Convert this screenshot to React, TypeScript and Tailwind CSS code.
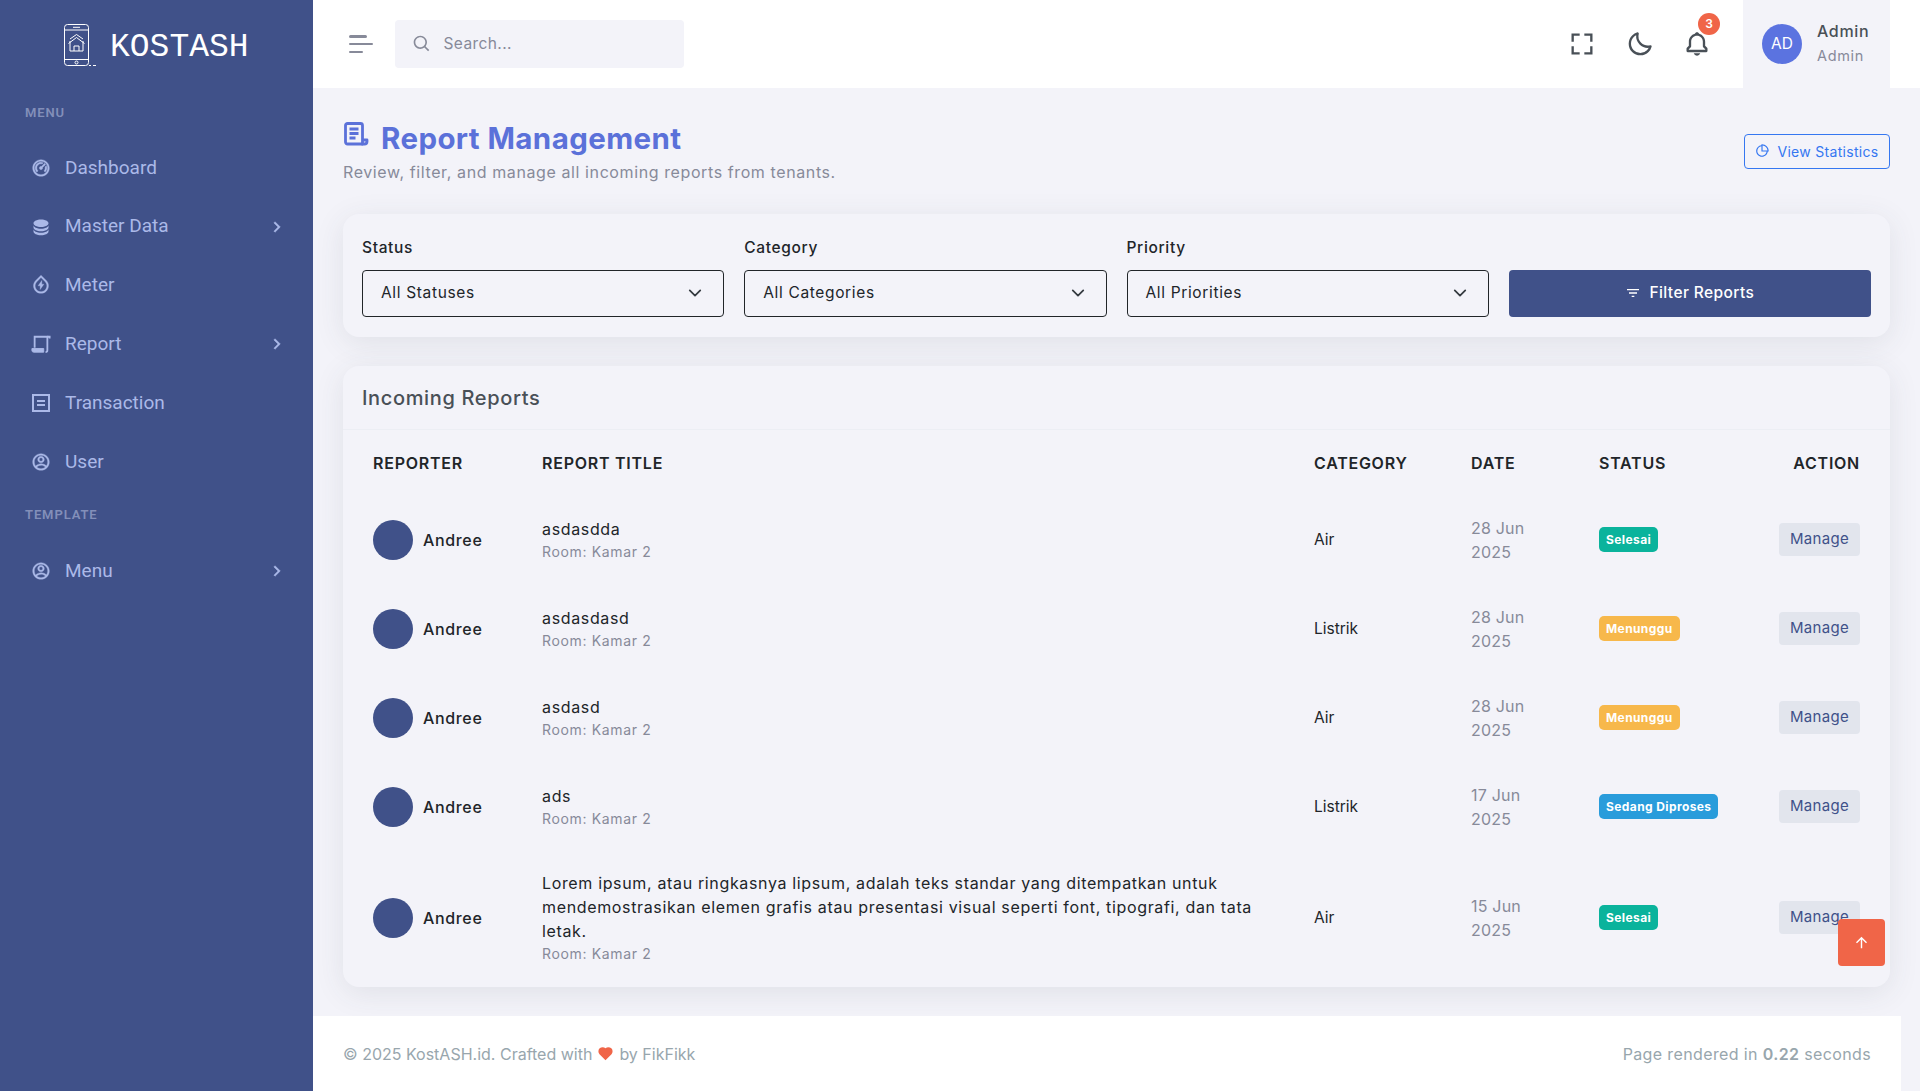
import { ReactNode } from 'react';
import {
  RiDashboard2Line,
  RiDatabase2Fill,
  RiWaterFlashLine,
  RiAccountCircleLine,
  RiArrowRightSLine,
  RiPieChart2Line,
  RiFilter3Line,
  RiArrowUpLine,
  RiHeartFill,
} from 'react-icons/ri';
import { BiFullscreen, BiMoon, BiBell, BiSearch } from 'react-icons/bi';

const Logo = () => (
  <svg width="36" height="44" viewBox="0 0 36 44" fill="none" stroke="#fff" strokeWidth="1">
    <rect x="1.5" y="1.5" width="24" height="41" rx="3" />
    <path d="M1.5 7h24M1.5 36.500h24M10 4.300h7" />
    <circle cx="13.500" cy="39.500" r="1.500" />
    <path d="M5.500 20.500l8-6 8 6M7 18v10h13V18M11 28v-5h5v5M7 16l6.500-4.500 6.500 4.500" />
    <path d="M26 42.500h2M30 42.500h3" />
  </svg>
);

const ScriptIcon = () => (
  <svg width="22" height="22" viewBox="0 0 22 22" fill="none" stroke="currentColor" strokeWidth="2">
    <path d="M4 15V3h15" />
    <path d="M18 3v15a2 2 0 0 1-2 2" />
    <path d="M1 16h13v4H3a2 2 0 0 1-2-2z" fill="currentColor" strokeWidth="1" />
    <path d="M18 3h2.500v2" />
  </svg>
);

const TransactionIcon = () => (
  <svg width="20" height="20" viewBox="0 0 20 20" fill="none" stroke="currentColor" strokeWidth="2">
    <rect x="2" y="2" width="16" height="16" />
    <path d="M6 8h8M6 12h8" />
  </svg>
);

const ReportIcon = () => (
  <svg width="26" height="26" viewBox="0 0 26 26" fill="none" stroke="#5b71d9" strokeWidth="2.800" strokeLinejoin="round">
    <path d="M2.500 3.500a2 2 0 0 1 2-2h13a2 2 0 0 1 2 2V22H4.500a2 2 0 0 1-2-2z" />
    <path d="M6.500 7h9M6.500 11.500h9M6.500 16h6" />
    <path d="M19.500 18h4.500v1.500a2.500 2.500 0 0 1-2.500 2.500h-3" />
  </svg>
);

const MenuTitle = ({ children }: { children: ReactNode }) => (
  <div className="pl-[25px] text-[13px] font-semibold tracking-[0.9px] text-[#838fb9]">{children}</div>
);

const NavItem = ({ icon, label, arrow }: { icon: ReactNode; label: string; arrow?: boolean }) => (
  <div className="flex h-[58.800px] items-center pl-[31px] pr-[26px] text-[#abb9e8]">
    <span className="flex w-[20px] justify-center">{icon}</span>
    <span className="ml-[14px] flex-1 text-[19px]">{label}</span>
    {arrow && <RiArrowRightSLine size={20} className="stroke-current stroke-[0.5]" />}
  </div>
);

const Select = ({ label, value }: { label: string; value: string }) => (
  <div>
    <div className="mb-[11px] text-[15.500px] font-medium leading-[23px] text-[#212529]">{label}</div>
    <div className="flex h-[47px] items-center justify-between rounded-[4px] border border-[#212529] pl-[18px] pr-[21px] text-[15.500px] text-[#212529]">
      {value}
      <svg width="14" height="14" viewBox="0 0 16 16" fill="none" stroke="#343a40" strokeWidth="2" strokeLinecap="round" strokeLinejoin="round">
        <path d="M2 5l6 6 6-6" />
      </svg>
    </div>
  </div>
);

const reports = [
  { title: 'asdasdda', category: 'Air', date: '28 Jun', status: 'Selesai', color: 'bg-[#0ab39c]' },
  { title: 'asdasdasd', category: 'Listrik', date: '28 Jun', status: 'Menunggu', color: 'bg-[#f7b84b]' },
  { title: 'asdasd', category: 'Air', date: '28 Jun', status: 'Menunggu', color: 'bg-[#f7b84b]' },
  { title: 'ads', category: 'Listrik', date: '17 Jun', status: 'Sedang Diproses', color: 'bg-[#299cdb]' },
  {
    title:
      'Lorem ipsum, atau ringkasnya lipsum, adalah teks standar yang ditempatkan untuk mendemostrasikan elemen grafis atau presentasi visual seperti font, tipografi, dan tata letak.',
    category: 'Air',
    date: '15 Jun',
    status: 'Selesai',
    color: 'bg-[#0ab39c]',
  },
];

export default function App() {
  return (
    <div className="flex h-screen overflow-hidden bg-[#f3f3f9] font-['Inter',sans-serif] tracking-[0.65px] text-[#212529]">
      {/* Sidebar */}
      <aside className="w-[313px] shrink-0 bg-[#405189] font-['Roboto',sans-serif] tracking-normal">
        <div className="flex h-[88px] items-center pl-[63px] pt-[2px]">
          <Logo />
          <span className="ml-[11px] mt-[5px] font-['Liberation_Mono',monospace] text-[33px] leading-none text-white">KOSTASH</span>
        </div>
        <div className="mt-[15px]">
          <MenuTitle>MENU</MenuTitle>
          <div className="mt-[16px]">
            <NavItem icon={<RiDashboard2Line size={24} className="stroke-current stroke-[0.4]" />} label="Dashboard" />
            <NavItem icon={<RiDatabase2Fill size={24} />} label="Master Data" arrow />
            <NavItem icon={<RiWaterFlashLine size={24} className="stroke-current stroke-[0.4]" />} label="Meter" />
            <NavItem icon={<ScriptIcon />} label="Report" arrow />
            <NavItem icon={<TransactionIcon />} label="Transaction" />
            <NavItem icon={<RiAccountCircleLine size={24} className="stroke-current stroke-[0.4]" />} label="User" />
          </div>
          <div className="mt-[14px]">
            <MenuTitle>TEMPLATE</MenuTitle>
          </div>
          <div className="mt-[17px]">
            <NavItem icon={<RiAccountCircleLine size={24} className="stroke-current stroke-[0.4]" />} label="Menu" arrow />
          </div>
        </div>
      </aside>

      <div className="flex min-w-0 flex-1 flex-col">
        {/* Topbar */}
        <header className="flex h-[88px] shrink-0 items-center bg-white pl-[36px] pr-[30px]">
          <div className="flex h-[18px] w-[24px] flex-col justify-between">
            <span className="h-[2.500px] w-[18px] rounded bg-[#878a99]" />
            <span className="h-[2.500px] w-[24px] rounded bg-[#878a99]" />
            <span className="h-[2.500px] w-[14px] rounded bg-[#878a99]" />
          </div>
          <div className="ml-[21.500px] flex h-[48px] w-[289px] items-center rounded-[4px] bg-[#f3f3f9] pl-[17px] tracking-[0.4px] text-[#878a99]">
            <BiSearch size={20} />
            <span className="ml-[12px] text-[15.500px]">Search...</span>
          </div>
          <div className="ml-auto flex items-center text-[#495057]">
            <BiFullscreen size={28} />
            <BiMoon size={28} className="ml-[30px]" />
            <div className="relative ml-[29px]">
              <BiBell size={28} />
              <span className="absolute -right-[9px] -top-[17px] flex h-[22px] w-[22px] items-center justify-center rounded-full bg-[#f06548] text-[12px] font-semibold tracking-normal text-white">
                3
              </span>
            </div>
            <div className="ml-[32px] flex h-[88px] w-[147px] items-center bg-[#f3f3f9] pl-[19px]">
              <div className="flex h-[40px] w-[40px] items-center justify-center rounded-full bg-[#5b73e0] text-[15.500px] tracking-normal text-white">
                AD
              </div>
              <div className="ml-[15px] pb-[2px] leading-none">
                <div className="text-[16px] font-medium text-[#495057]">Admin</div>
                <div className="mt-[10px] text-[14.500px] text-[#878a99]">Admin</div>
              </div>
            </div>
          </div>
        </header>

        {/* Content */}
        <main className="flex-1 pl-[30px] pr-[30px] pt-[32px]">
          <div className="flex items-start justify-between">
            <div>
              <h1 className="flex items-center text-[29.500px] font-bold leading-[36px] tracking-[0.4px] text-[#5b71d9]">
                <span className="-mt-[6px]"><ReportIcon /></span>
                <span className="ml-[12px]">Report Management</span>
              </h1>
              <p className="mt-[4px] text-[16px] leading-[24px] tracking-[0.6px] text-[#878a99]">
                Review, filter, and manage all incoming reports from tenants.
              </p>
            </div>
            <div className="mt-[14px] flex h-[35px] w-[146px] items-center justify-center rounded-[4px] border border-[#3577f1] text-[14px] tracking-[0.3px] text-[#3577f1]">
              <RiPieChart2Line size={14} className="-mt-[2px]" />
              <span className="ml-[8px]">View Statistics</span>
            </div>
          </div>

          {/* Filters */}
          <section className="mt-[29.500px] grid h-[123px] grid-cols-4 items-end gap-x-[20px] rounded-[16px] bg-[#f3f3f9] px-[19px] pb-[20px] shadow-[0_6px_30px_rgba(56,65,74,0.1)]">
            <Select label="Status" value="All Statuses" />
            <Select label="Category" value="All Categories" />
            <Select label="Priority" value="All Priorities" />
            <div className="flex h-[47px] items-center justify-center rounded-[4px] bg-[#405189] text-[15.500px] font-medium tracking-[0.4px] text-white">
              <RiFilter3Line size={16} />
              <span className="ml-[8px]">Filter Reports</span>
            </div>
          </section>

          {/* Table */}
          <section className="mt-[29.500px] rounded-[16px] bg-[#f3f3f9] shadow-[0_6px_30px_rgba(56,65,74,0.1)]">
            <div className="flex h-[64px] items-center border-b border-[#eceef4] px-[19px] text-[20px] font-medium text-[#495057]">
              Incoming Reports
            </div>
            <div className="px-[19px] pb-[3px]">
              <table className="w-full table-fixed border-collapse">
                <colgroup>
                  <col className="w-[169px]" />
                  <col className="w-[772px]" />
                  <col className="w-[157px]" />
                  <col className="w-[128px]" />
                  <col />
                </colgroup>
                <thead>
                  <tr className="h-[65px] text-left text-[16px] font-semibold tracking-[0.75px] text-[#212529]">
                    <th className="px-[11px] font-semibold">REPORTER</th>
                    <th className="px-[11px] font-semibold">REPORT TITLE</th>
                    <th className="px-[11px] font-semibold">CATEGORY</th>
                    <th className="px-[11px] font-semibold">DATE</th>
                    <th className="flex h-[65px] items-center justify-between px-[11px] font-semibold">
                      <span>STATUS</span>
                      <span>ACTION</span>
                    </th>
                  </tr>
                </thead>
                <tbody className="text-[16px]">
                  {reports.map((r, i) => (
                    <tr key={i} className={i === 4 ? 'h-[133px]' : 'h-[89px]'}>
                      <td className="px-[11px]">
                        <div className="flex items-center">
                          <span className="h-[40px] w-[40px] rounded-full bg-[#405189]" />
                          <span className="ml-[10px] font-medium">Andree</span>
                        </div>
                      </td>
                      <td className="px-[11px] leading-[24px]">
                        {r.title}
                        <div className="text-[14px] leading-[22px] text-[#878a99]">Room: Kamar 2</div>
                      </td>
                      <td className="px-[11px] text-[15.500px] tracking-normal">{r.category}</td>
                      <td className="px-[11px] leading-[24px] tracking-[0.2px] text-[#878a99]">
                        {r.date}
                        <br />
                        2025
                      </td>
                      <td className="px-[11px]">
                        <div className="flex items-center justify-between">
                          <span className={`rounded-[5px] px-[7px] py-[5px] text-[12px] font-bold leading-[15px] tracking-[0.4px] text-white ${r.color}`}>
                            {r.status}
                          </span>
                          <span className="flex h-[33px] w-[81px] items-center justify-center rounded-[4px] bg-[#e2e5ed] text-[15px] tracking-[0.3px] text-[#405189]">
                            Manage
                          </span>
                        </div>
                      </td>
                    </tr>
                  ))}
                </tbody>
              </table>
            </div>
          </section>
        </main>

        {/* Footer */}
        <footer className="mr-[19px] flex h-[75px] shrink-0 items-center justify-between bg-white pl-[30px] pr-[30px] text-[16px] tracking-normal text-[#98a6ad]">
          <div className="flex items-center">
            © 2025 KostASH.id. Crafted with
            <RiHeartFill size={17} className="mx-[5px] text-[#f06548]" />
            by FikFikk
          </div>
          <div className="tracking-[0.37px]">
            Page rendered in <b className="font-semibold">0.22</b> seconds
          </div>
        </footer>
      </div>

      <button className="fixed bottom-[125px] right-[35px] flex h-[47px] w-[47px] items-center justify-center rounded-[4px] bg-[#f06548] text-white">
        <RiArrowUpLine size={17} />
      </button>
    </div>
  );
}
